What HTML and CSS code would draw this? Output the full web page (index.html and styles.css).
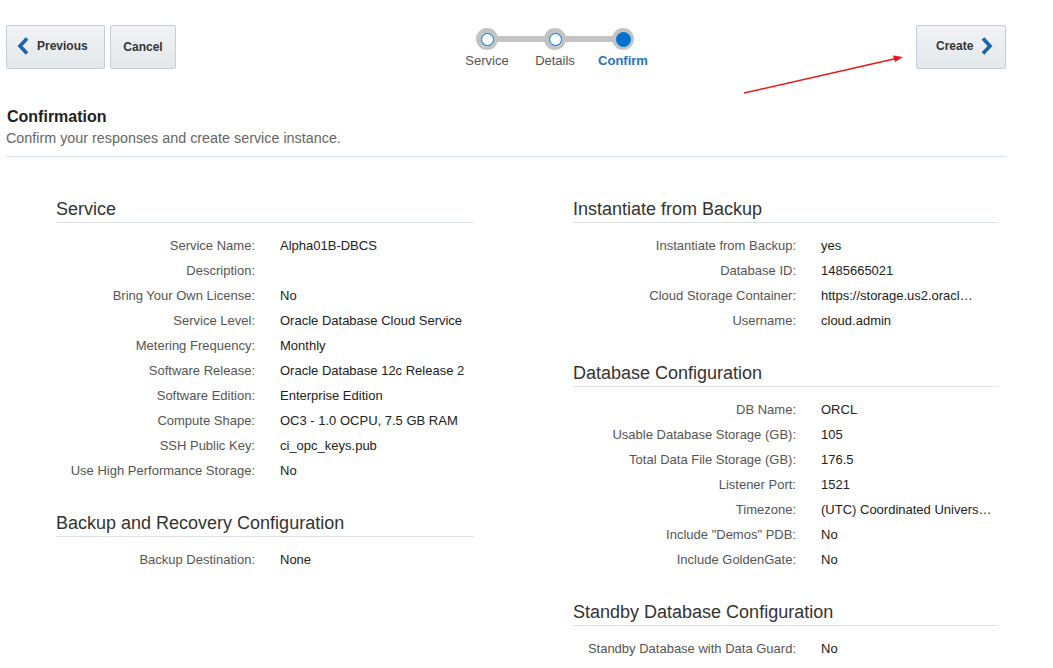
FILE: index.html
```html
<!DOCTYPE html>
<html>
<head>
<meta charset="utf-8">
<link rel="stylesheet" href="styles.css">
</head>
<body>
<div class="page">
  <div class="toolbar">
    <div class="btn-group">
      <button class="btn btn-prev">
        <svg class="chev" width="12" height="18" viewBox="0 0 12 18"><path d="M10 1.5 L3 9 L10 16.5" fill="none" stroke="#1b64ad" stroke-width="3.6" stroke-linejoin="miter"/></svg>
        <span>Previous</span>
      </button>
      <button class="btn btn-cancel">Cancel</button>
    </div>
    <div class="train">
      <div class="step">
        <div class="dot-row"><span class="bar bar-right"></span><span class="dot"><span class="inner"></span></span></div>
        <div class="step-label">Service</div>
      </div>
      <div class="step">
        <div class="dot-row"><span class="bar bar-left"></span><span class="bar bar-right"></span><span class="dot"><span class="inner"></span></span></div>
        <div class="step-label">Details</div>
      </div>
      <div class="step current">
        <div class="dot-row"><span class="bar bar-left"></span><span class="dot"><span class="inner"></span></span></div>
        <div class="step-label">Confirm</div>
      </div>
    </div>
    <button class="btn btn-create">
      <span>Create</span>
      <svg class="chev" width="12" height="18" viewBox="0 0 12 18"><path d="M2 1.5 L9 9 L2 16.5" fill="none" stroke="#1b64ad" stroke-width="3.6" stroke-linejoin="miter"/></svg>
    </button>
  </div>

  <div class="intro">
    <h1 class="title">Confirmation</h1>
    <p class="subtitle">Confirm your responses and create service instance.</p>
  </div>

  <div class="columns">
    <div class="col col-left">
      <section class="sec">
        <h2 class="sec-title">Service</h2>
        <div class="rows">
          <div class="row"><span class="lbl">Service Name:</span><span class="val">Alpha01B-DBCS</span></div>
          <div class="row"><span class="lbl">Description:</span><span class="val"></span></div>
          <div class="row"><span class="lbl">Bring Your Own License:</span><span class="val">No</span></div>
          <div class="row"><span class="lbl">Service Level:</span><span class="val">Oracle Database Cloud Service</span></div>
          <div class="row"><span class="lbl">Metering Frequency:</span><span class="val">Monthly</span></div>
          <div class="row"><span class="lbl">Software Release:</span><span class="val">Oracle Database 12c Release 2</span></div>
          <div class="row"><span class="lbl">Software Edition:</span><span class="val">Enterprise Edition</span></div>
          <div class="row"><span class="lbl">Compute Shape:</span><span class="val">OC3 - 1.0 OCPU, 7.5 GB RAM</span></div>
          <div class="row"><span class="lbl">SSH Public Key:</span><span class="val">ci_opc_keys.pub</span></div>
          <div class="row"><span class="lbl">Use High Performance Storage:</span><span class="val">No</span></div>
        </div>
      </section>
      <section class="sec">
        <h2 class="sec-title">Backup and Recovery Configuration</h2>
        <div class="rows">
          <div class="row"><span class="lbl">Backup Destination:</span><span class="val">None</span></div>
        </div>
      </section>
    </div>
    <div class="col col-right">
      <section class="sec">
        <h2 class="sec-title">Instantiate from Backup</h2>
        <div class="rows">
          <div class="row"><span class="lbl">Instantiate from Backup:</span><span class="val">yes</span></div>
          <div class="row"><span class="lbl">Database ID:</span><span class="val">1485665021</span></div>
          <div class="row"><span class="lbl">Cloud Storage Container:</span><span class="val" title="https://storage.us2.oraclecloud.com">https://storage.us2.oracl…</span></div>
          <div class="row"><span class="lbl">Username:</span><span class="val">cloud.admin</span></div>
        </div>
      </section>
      <section class="sec">
        <h2 class="sec-title">Database Configuration</h2>
        <div class="rows">
          <div class="row"><span class="lbl">DB Name:</span><span class="val">ORCL</span></div>
          <div class="row"><span class="lbl">Usable Database Storage (GB):</span><span class="val">105</span></div>
          <div class="row"><span class="lbl">Total Data File Storage (GB):</span><span class="val">176.5</span></div>
          <div class="row"><span class="lbl">Listener Port:</span><span class="val">1521</span></div>
          <div class="row"><span class="lbl">Timezone:</span><span class="val" title="(UTC) Coordinated Universal Time">(UTC) Coordinated Univers…</span></div>
          <div class="row"><span class="lbl">Include "Demos" PDB:</span><span class="val">No</span></div>
          <div class="row"><span class="lbl">Include GoldenGate:</span><span class="val">No</span></div>
        </div>
      </section>
      <section class="sec">
        <h2 class="sec-title">Standby Database Configuration</h2>
        <div class="rows">
          <div class="row"><span class="lbl">Standby Database with Data Guard:</span><span class="val">No</span></div>
        </div>
      </section>
    </div>
  </div>

  <svg class="arrow" width="1053" height="668" viewBox="0 0 1053 668">
    <line x1="744" y1="93" x2="896" y2="58.5" stroke="#e8191c" stroke-width="1.4"/>
    <polygon points="903,57 893,55.5 895,62" fill="#e8191c"/>
  </svg>
</div>
</body>
</html>
```

FILE: styles.css
```css
html, body {
  margin: 0;
  padding: 0;
  background: #ffffff;
}
body {
  font-family: "Liberation Sans", Arial, sans-serif;
  color: #333;
}
.page {
  position: relative;
  width: 1053px;
  height: 668px;
  overflow: hidden;
}
.toolbar {
  display: flex;
  align-items: flex-start;
  padding: 25px 47px 0 6px;
  height: 44px;
}
.btn-group {
  display: flex;
  gap: 5px;
}
.btn {
  height: 44px;
  box-sizing: border-box;
  border: 1px solid #c4ced7;
  border-radius: 2px;
  background: linear-gradient(#f1f3f5, #e4e8eb);
  font-family: "Liberation Sans", Arial, sans-serif;
  font-size: 12px;
  font-weight: bold;
  color: #333;
  display: flex;
  align-items: center;
  padding: 0;
  cursor: pointer;
}
.btn-prev {
  width: 99px;
  padding-left: 10px;
  gap: 8px;
  padding-bottom: 2px;
}
.btn-cancel {
  width: 66px;
  justify-content: center;
}
.btn-create {
  width: 90px;
  margin-left: auto;
  padding-left: 19px;
  gap: 8px;
  padding-bottom: 2px;
}
.chev {
  display: block;
  flex: none;
}
.train {
  display: flex;
  margin-left: 277px;
}
.step {
  width: 68px;
  display: flex;
  flex-direction: column;
  align-items: center;
}
.dot-row {
  position: relative;
  width: 68px;
  height: 22px;
  margin-top: 3px;
  display: flex;
  justify-content: center;
}
.bar {
  position: absolute;
  top: 8px;
  height: 6px;
  width: 34px;
  background: #c3c3c3;
}
.bar-left { left: 0; }
.bar-right { right: 0; }
.dot {
  position: relative;
  width: 22px;
  height: 22px;
  border-radius: 50%;
  background: #c3c3c3;
  display: flex;
  align-items: center;
  justify-content: center;
}
.inner {
  width: 11px;
  height: 11px;
  border-radius: 50%;
  background: #fff;
  border: 1.5px solid #0572ce;
}
.current .inner {
  background: #0572ce;
  width: 13px;
  height: 13px;
  border: 0.5px solid #0572ce;
}
.step-label {
  margin-top: 3px;
  font-size: 13px;
  line-height: 16px;
  color: #555;
}
.current .step-label {
  color: #2873c5;
  font-weight: bold;
}
.intro {
  margin: 38px 47px 0 6px;
  border-bottom: 1px solid #d6dfe6;
  padding-bottom: 9px;
}
.title {
  margin: 0 0 0 1px;
  font-size: 16px;
  line-height: 20px;
  font-weight: bold;
  color: #222;
}
.subtitle {
  margin: 2px 0 0 0;
  font-size: 14.35px;
  line-height: 18px;
  color: #666;
}
.columns {
  display: grid;
  grid-template-columns: 418px 425px;
  column-gap: 99px;
  margin: 41px 0 0 56px;
}
.sec + .sec {
  margin-top: 29px;
}
.sec-title {
  margin: 0;
  font-size: 18px;
  line-height: 22px;
  font-weight: normal;
  color: #333;
  padding-bottom: 2px;
  border-bottom: 1px solid #dde3e8;
}
.rows {
  margin-top: 10px;
}
.row {
  display: flex;
  height: 25px;
  line-height: 25px;
  font-size: 13px;
}
.lbl {
  flex: none;
  text-align: right;
  color: #555;
  padding-right: 25px;
}
.col-left .lbl { width: 199px; }
.col-right .lbl { width: 223px; }
.val {
  color: #222;
  white-space: nowrap;
}
.arrow {
  position: absolute;
  left: 0;
  top: 0;
  pointer-events: none;
}
```
